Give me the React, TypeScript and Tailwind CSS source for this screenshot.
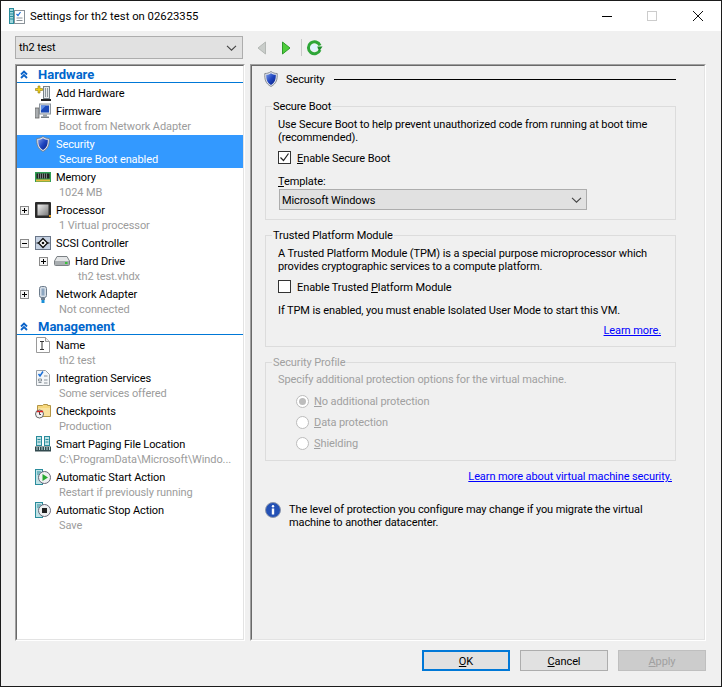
import React from 'react';

const Shield = ({ id }: { id: string }) => (
  <svg width="14" height="16" viewBox="0 0 14 16" className="shrink-0">
    <defs>
      <linearGradient id={id} x1="0" y1="0" x2="1" y2="1">
        <stop offset="0" stopColor="#7d9be8" />
        <stop offset="0.5" stopColor="#1f45c0" />
        <stop offset="1" stopColor="#0a1f80" />
      </linearGradient>
    </defs>
    <path d="M7 .5C5 2 3 2.500.8 2.500c-.3 5.500.5 10 6.200 13 5.700-3 6.500-7.500 6.200-13C11 2.500 9 2 7 .5z" fill="#dfe3ea" stroke="#6f7683" strokeWidth=".8" />
    <path d="M7 2.200C5.500 3.300 4 3.700 2.200 3.800c0 4.500.6 7.800 4.800 10.200 4.200-2.400 4.800-5.700 4.800-10.200C10 3.700 8.500 3.300 7 2.200z" fill={`url(#${id})`} />
  </svg>
);

const AddHardwareIcon = () => (
  <svg width="16" height="16" viewBox="0 0 16 16">
    <rect x="8.500" y="1.500" width="6" height="12" fill="#e4e8ea" stroke="#77838a" />
    <rect x="10" y="3" width="1" height="9" fill="#8d989e" />
    <rect x="12" y="3" width="1" height="9" fill="#8d989e" />
    <rect x="6" y="14" width="10" height="2" fill="#222" />
    <path d="M3 1h2v2.500h2.500v2H5V8H3V5.500H.5v-2H3z" fill="#f2d21b" stroke="#8f7a10" strokeWidth=".6" />
  </svg>
);

const FirmwareIcon = () => (
  <svg width="16" height="16" viewBox="0 0 16 16">
    <rect x="0" y="5" width="4" height="10" fill="#a9adb0" stroke="#666" strokeWidth=".8" />
    <rect x="4.500" y="1" width="11" height="10" fill="#dde2e8" stroke="#8a939c" />
    <rect x="6" y="2.500" width="8" height="7" fill="#1b49b8" />
    <path d="M6 2.500h5l-5 5z" fill="#5f8fe8" />
    <rect x="8" y="11.500" width="4" height="2" fill="#9aa2a8" />
    <rect x="6" y="13.500" width="8" height="1.500" fill="#777f85" />
  </svg>
);

const MemoryIcon = () => (
  <svg width="16" height="10" viewBox="0 0 16 10">
    <rect width="16" height="10" fill="#2f9e54" />
    <rect x="1.500" y="1.500" width="13" height="5" fill="#222" />
    <path d="M3.500 1.500v5M5.500 1.500v5M7.500 1.500v5M9.500 1.500v5M11.500 1.500v5" stroke="#9aa" strokeWidth=".7" />
    <rect x="1" y="7.500" width="14" height="2" fill="#e2b93a" />
  </svg>
);

const ProcessorIcon = () => (
  <svg width="16" height="16" viewBox="0 0 16 16">
    <defs>
      <linearGradient id="cpu" x1="0" y1="0" x2="1" y2="1">
        <stop offset="0" stopColor="#f2f2f2" />
        <stop offset="1" stopColor="#777" />
      </linearGradient>
    </defs>
    <rect width="16" height="16" rx="1" fill="#2b2b2b" />
    <rect x="2.500" y="2.500" width="11" height="11" fill="url(#cpu)" />
    <rect x="14" y="13" width="2" height="2" fill="#e09a20" />
  </svg>
);

const ScsiIcon = () => (
  <svg width="16" height="14" viewBox="0 0 16 14">
    <rect x=".5" y=".5" width="15" height="13" fill="#c5d1e2" stroke="#6a7688" />
    <path d="M8 2.500L12.500 7 8 11.500 3.500 7z" fill="#fff" stroke="#111" strokeWidth="1.300" />
    <path d="M1.500 7h3M11.500 7h3" stroke="#111" strokeWidth="1.200" />
    <circle cx="8" cy="7" r="1.300" fill="#111" />
  </svg>
);

const DriveIcon = () => (
  <svg width="16" height="10" viewBox="0 0 16 10">
    <path d="M3 .5h10l2.500 4.500v3.500a1 1 0 0 1-1 1h-13a1 1 0 0 1-1-1V5z" fill="#e3e5e6" stroke="#7b8084" />
    <rect x="1" y="5" width="14" height="4" fill="#a8adb0" />
    <rect x="11" y="6" width="2.500" height="2" fill="#37c23c" />
  </svg>
);

const NetworkIcon = () => (
  <svg width="10" height="17" viewBox="0 0 10 17">
    <rect x="1.500" y=".5" width="7" height="11" rx="2" fill="#d5dde6" stroke="#6d7c8c" />
    <rect x="3.500" y="2.500" width="3" height="7" fill="#8da6c0" />
    <rect x="3" y="11.500" width="4" height="2.500" fill="#6d7c8c" />
    <rect x="3.500" y="14" width="3" height="3" fill="#1b8fd8" />
  </svg>
);

const NameIcon = () => (
  <svg width="14" height="16" viewBox="0 0 14 16">
    <path d="M.5.500h9l4 4v11H.5z" fill="#fff" stroke="#9a9a9a" />
    <path d="M9.500.500v4h4" fill="#eee" stroke="#9a9a9a" />
    <path d="M4 4.500h4M6 4.500v8M4 12.500h4" stroke="#333" fill="none" />
  </svg>
);

const IntegrationIcon = () => (
  <svg width="14" height="16" viewBox="0 0 14 16">
    <path d="M.5.500h9l4 4v11H.5z" fill="#f4f6f8" stroke="#9aa0a6" />
    <path d="M2.500 4l1.500 2 3-4.500" stroke="#1a6fd8" strokeWidth="1.500" fill="none" />
    <path d="M8 6h3.500M2.500 9h3v2h-3zM8 10h3.500M2.500 12.500h3M8 13h3.500" stroke="#8a9299" fill="none" />
  </svg>
);

const CheckpointsIcon = () => (
  <svg width="16" height="16" viewBox="0 0 16 16">
    <path d="M2.500 2.500h5l1-1h4v1h3v11h-13z" fill="#f6d77c" stroke="#b39445" />
    <path d="M3 5h12v8H3z" fill="#f9e3a0" />
    <circle cx="4.500" cy="11" r="4" fill="#f4f4f4" stroke="#666" />
    <path d="M2 8.500h6" stroke="#d22" strokeWidth="1.500" />
    <path d="M4.500 9v2.500h1.500" stroke="#444" fill="none" />
  </svg>
);

const PagingIcon = () => (
  <svg width="16" height="16" viewBox="0 0 16 16">
    <rect x="1.500" y=".5" width="5" height="9" fill="#bfe3e6" stroke="#2a8c9c" />
    <rect x="9.500" y=".5" width="5" height="9" fill="#bfe3e6" stroke="#2a8c9c" />
    <path d="M2.500 3.500h3M2.500 6h3M10.500 3.500h3M10.500 6h3" stroke="#2a8c9c" />
    <rect x="0" y="10.500" width="16" height="5" fill="#324a4f" />
    <path d="M2 11v3M4.500 11v3M7 11v3M9.500 11v3M12 11v3M14.500 11v3" stroke="#b6d6d8" />
  </svg>
);

const ActionIcon = ({ stop }: { stop?: boolean }) => (
  <svg width="16" height="16" viewBox="0 0 16 16">
    <rect x=".5" y=".5" width="7" height="15" fill="#bfe3e6" stroke="#2a8c9c" />
    <path d="M2 3h4M2 5h4" stroke="#2a8c9c" />
    <circle cx="9.500" cy="8.500" r="6" fill="#eef0f1" stroke="#667" />
    {stop ? <rect x="7" y="6" width="5" height="5" fill="#222" /> : <path d="M7.500 5l5.500 3.500L7.500 12z" fill="#27a830" />}
  </svg>
);

const Chevrons = () => (
  <svg width="8" height="9" viewBox="0 0 8 9" className="shrink-0">
    <path d="M1 4.500l3-3 3 3M1 8l3-3 3 3" stroke="#0a63c9" strokeWidth="1.800" fill="none" />
  </svg>
);

const Expander = ({ open }: { open?: boolean }) => (
  <span className="relative block h-[9px] w-[9px] border border-[#8a8a8a] bg-[#f4f4f4]">
    <span className="absolute left-[1px] top-[3px] h-px w-[5px] bg-black" />
    {!open && <span className="absolute left-[3px] top-[1px] h-[5px] w-px bg-black" />}
  </span>
);

const Section = ({ title }: { title: string }) => (
  <div className="h-[18px] shrink-0">
    <div className="flex h-[17px] items-center border-b border-[#0078d7] pl-[3px] text-[13px] font-bold leading-[15px] tracking-normal text-[#0066cc]">
      <Chevrons />
      <span className="ml-[10px] pt-[1px]">{title}</span>
    </div>
  </div>
);

interface RowProps {
  icon: React.ReactNode;
  title: string;
  sub?: string;
  expander?: 'open' | 'closed';
  selected?: boolean;
  nested?: boolean;
}

const Row = ({ icon, title, sub, expander, selected, nested }: RowProps) => (
  <div className={`flex pt-[1px] ${sub ? 'h-[33px]' : 'h-[18px]'} ${selected ? 'bg-[#3399ff] text-white' : 'text-black'} ${nested ? 'pl-[22px]' : 'pl-[3px]'}`}>
    <div className="flex h-[16px] w-[15px] shrink-0 items-center">
      {expander && <Expander open={expander === 'open'} />}
    </div>
    <div className="flex h-[16px] w-[16px] shrink-0 items-center justify-center">{icon}</div>
    <div className="ml-[5px] min-w-0 flex-1 pt-[1px]">
      <div className="h-[15px] whitespace-nowrap leading-[15px]">{title}</div>
      {sub && <div className={`ml-[3px] whitespace-nowrap leading-[15px] ${selected ? 'text-white' : 'text-[#9c9c9c]'}`}>{sub}</div>}
    </div>
  </div>
);

const Sunken = ({ className, children }: { className: string; children: React.ReactNode }) => (
  <div className={`border border-b-white border-l-[#a0a0a0] border-r-white border-t-[#a0a0a0] ${className}`}>
    <div className="h-full border border-b-[#e3e3e3] border-l-[#696969] border-r-[#e3e3e3] border-t-[#696969]">{children}</div>
  </div>
);

const Down = () => (
  <svg width="11" height="6" viewBox="0 0 11 6">
    <path d="M1 .8l4.500 4.400L10 .8" stroke="#444" strokeWidth="1.100" fill="none" />
  </svg>
);

const Check = ({ checked }: { checked?: boolean }) => (
  <span className="flex h-[13px] w-[13px] shrink-0 items-center justify-center border border-[#333] bg-white">
    {checked && (
      <svg width="11" height="11" viewBox="0 0 11 11">
        <path d="M1.500 5.500l3 3 5-7" stroke="#222" strokeWidth="1.200" fill="none" />
      </svg>
    )}
  </span>
);

const Radio = ({ checked, children }: { checked?: boolean; children: React.ReactNode }) => (
  <div className="flex h-[13px] items-center text-[#a0a0a0]">
    <span className="flex h-[13px] w-[13px] shrink-0 items-center justify-center rounded-full border border-[#bcbcbc] bg-white">
      {checked && <span className="h-[7px] w-[7px] rounded-full bg-[#bcbcbc]" />}
    </span>
    <span className="ml-[5px] leading-[15px]">{children}</span>
  </div>
);

const Group = ({ title, disabled, children }: { title: string; disabled?: boolean; children: React.ReactNode }) => (
  <fieldset className="border border-[#dcdcdc] pb-0 pl-[12px] pr-[14px] pt-[3px]">
    <legend className={`ml-[-6px] px-[1px] leading-[15px] ${disabled ? 'text-[#a0a0a0]' : ''}`}>{title}</legend>
    {children}
  </fieldset>
);

const Btn = ({ children, variant }: { children: React.ReactNode; variant?: 'default' | 'disabled' }) => (
  <button
    className={`h-[21px] w-[88px] pt-[1px] text-center leading-[15px] ${
      variant === 'default'
        ? 'border-2 border-[#0078d7] bg-[#e1e1e1] text-black'
        : variant === 'disabled'
          ? 'border border-[#bfbfbf] bg-[#cccccc] text-[#a0a0a0]'
          : 'border border-[#adadad] bg-[#e1e1e1] text-black'
    }`}
  >
    {children}
  </button>
);

export default function App() {
  return (
    <div className="flex h-[687px] w-[722px] flex-col border border-[#1b1b1b] bg-[#f0f0f0] font-['Roboto',sans-serif] text-[11px] tracking-[-0.1px] text-black">
      <div className="flex h-[30px] shrink-0 items-center bg-white pl-[8px]">
        <svg width="16" height="16" viewBox="0 0 16 16">
          <rect x=".5" y=".5" width="4" height="15" fill="#9fd6dc" stroke="#2a8c9c" />
          <path d="M1 3.500h3M1 6h3M1 8.500h3M1 11h3" stroke="#2a8c9c" />
          <rect x="5.500" y="2.500" width="10" height="13" fill="#fff" stroke="#8a9299" />
          <path d="M7.500 6l1.500 1.500 2.500-3.500" stroke="#1a6fd8" strokeWidth="1.200" fill="none" />
          <path d="M7.500 10h6M7.500 12.500h6" stroke="#8a9299" />
        </svg>
        <span className="ml-[5px] text-[11.300px] leading-[15px] tracking-normal">Settings for th2 test on 02623355</span>
        <div className="ml-auto flex items-center">
          <span className="mr-[35px] h-px w-[10px] bg-black" />
          <span className="mr-[36px] h-[10px] w-[10px] border border-[#cccccc]" />
          <svg width="10" height="10" viewBox="0 0 10 10" className="mr-[18px]">
            <path d="M0 0l10 10M10 0L0 10" stroke="#111" strokeWidth="1" />
          </svg>
        </div>
      </div>

      <div className="mt-[5px] flex h-[23px] shrink-0 items-center pl-[14px]">
        <div className="flex h-[23px] w-[228px] items-center justify-between border border-[#adadad] bg-[#e1e1e1] pl-[3px] pr-[5px] leading-[15px]">
          <span>th2 test</span>
          <Down />
        </div>
        <svg width="10" height="14" viewBox="0 0 10 14" className="ml-[14px]">
          <path d="M8.500 1v12L1 7z" fill="#c9cdca" stroke="#b4b8b5" />
        </svg>
        <svg width="10" height="14" viewBox="0 0 10 14" className="ml-[14px]">
          <path d="M1.500 1v12L9 7z" fill="#4fce3c" stroke="#2e9a2a" />
        </svg>
        <span className="ml-[10px] h-[17px] w-px bg-[#c9c9c9]" />
        <svg width="17" height="17" viewBox="0 0 17 17" className="ml-[4px]">
          <path d="M14 6.500A6 6 0 1 0 14 11" stroke="#2ea638" strokeWidth="3" fill="none" />
          <path d="M10.500 8.500h6l-3 -4.500z" fill="#1f8f2b" transform="rotate(180 13.500 8)" />
          <circle cx="8" cy="8.500" r="3.500" fill="#dff3ff" />
        </svg>
      </div>

      <div className="mt-[5px] flex h-[577px] shrink-0 pl-[14px]">
        <Sunken className="w-[230px] bg-white">
          <div className="flex flex-col">
            <Section title="Hardware" />
            <Row icon={<AddHardwareIcon />} title="Add Hardware" />
            <Row icon={<FirmwareIcon />} title="Firmware" sub="Boot from Network Adapter" />
            <Row icon={<Shield id="nav-shield" />} title="Security" sub="Secure Boot enabled" selected />
            <Row icon={<MemoryIcon />} title="Memory" sub="1024 MB" />
            <Row icon={<ProcessorIcon />} title="Processor" sub="1 Virtual processor" expander="closed" />
            <Row icon={<ScsiIcon />} title="SCSI Controller" expander="open" />
            <Row icon={<DriveIcon />} title="Hard Drive" sub="th2 test.vhdx" expander="closed" nested />
            <Row icon={<NetworkIcon />} title="Network Adapter" sub="Not connected" expander="closed" />
            <Section title="Management" />
            <Row icon={<NameIcon />} title="Name" sub="th2 test" />
            <Row icon={<IntegrationIcon />} title="Integration Services" sub="Some services offered" />
            <Row icon={<CheckpointsIcon />} title="Checkpoints" sub="Production" />
            <Row icon={<PagingIcon />} title="Smart Paging File Location" sub="C:\ProgramData\Microsoft\Windo..." />
            <Row icon={<ActionIcon />} title="Automatic Start Action" sub="Restart if previously running" />
            <Row icon={<ActionIcon stop />} title="Automatic Stop Action" sub="Save" />
          </div>
        </Sunken>

        <Sunken className="ml-[5px] w-[456px]">
          <div className="pl-[13px] pr-[28px]">
            <div className="-ml-px mb-[12px] mt-[5px] flex h-[16px] items-center">
              <Shield id="head-shield" />
              <span className="ml-[8px] leading-[15px]">Security</span>
              <span className="ml-[9px] h-px flex-1 bg-black" />
            </div>

            <Group title="Secure Boot">
              <p className="mt-[1px] leading-[13px]">Use Secure Boot to help prevent unauthorized code from running at boot time (recommended).</p>
              <div className="mt-[7px] flex h-[13px] items-center">
                <Check checked />
                <span className="ml-[6px] pt-[1px] leading-[15px]"><u>E</u>nable Secure Boot</span>
              </div>
              <div className="mt-[10px] leading-[15px]"><u>T</u>emplate:</div>
              <div className="mb-[9px] ml-px flex h-[21px] w-[308px] items-center justify-between border border-[#adadad] bg-[#e1e1e1] pl-[2px] pr-[4px] leading-[15px]">
                <span className="pt-[1px]">Microsoft Windows</span>
                <Down />
              </div>
            </Group>

            <div className="mt-[8px]">
              <Group title="Trusted Platform Module">
                <p className="mt-[1px] leading-[13px]">A Trusted Platform Module (TPM) is a special purpose microprocessor which provides cryptographic services to a compute platform.</p>
                <div className="mt-[7px] flex h-[13px] items-center">
                  <Check />
                  <span className="ml-[6px] pt-[1px] leading-[15px]">Enable Trusted <u>P</u>latform Module</span>
                </div>
                <p className="mt-[11px] leading-[13px]">If TPM is enabled, you must enable Isolated User Mode to start this VM.</p>
                <div className="mb-[8px] mt-[6px] text-right leading-[15px]">
                  <a className="text-[#0000ff] underline">Learn more.</a>
                </div>
              </Group>
            </div>

            <div className="mt-[8px]">
              <Group title="Security Profile" disabled>
                <p className="leading-[13px] text-[#a0a0a0]">Specify additional protection options for the virtual machine.</p>
                <div className="mb-[10px] ml-[18px] mt-[9px] flex flex-col gap-[8px]">
                  <Radio checked><u>N</u>o additional protection</Radio>
                  <Radio><u>D</u>ata protection</Radio>
                  <Radio><u>S</u>hielding</Radio>
                </div>
              </Group>
            </div>

            <div className="mt-[8px] pr-[4px] text-right leading-[15px]">
              <a className="text-[#0000ff] underline">Learn more about virtual machine security.</a>
            </div>

            <div className="mt-[18px] flex">
              <svg width="16" height="16" viewBox="0 0 16 16" className="shrink-0">
                <circle cx="8" cy="8" r="7.500" fill="#2451b5" stroke="#8c97ad" />
                <circle cx="8" cy="4.200" r="1.200" fill="#fff" />
                <rect x="6.800" y="6.500" width="2.400" height="6" fill="#fff" />
              </svg>
              <p className="ml-[8px] pt-[1px] leading-[13px]">The level of protection you configure may change if you migrate the virtual machine to another datacenter.</p>
            </div>
          </div>
        </Sunken>
      </div>

      <div className="mt-[9px] flex justify-end gap-[10px] pr-[15px]">
        <Btn variant="default"><u>O</u>K</Btn>
        <Btn><u>C</u>ancel</Btn>
        <Btn variant="disabled"><u>A</u>pply</Btn>
      </div>
    </div>
  );
}
